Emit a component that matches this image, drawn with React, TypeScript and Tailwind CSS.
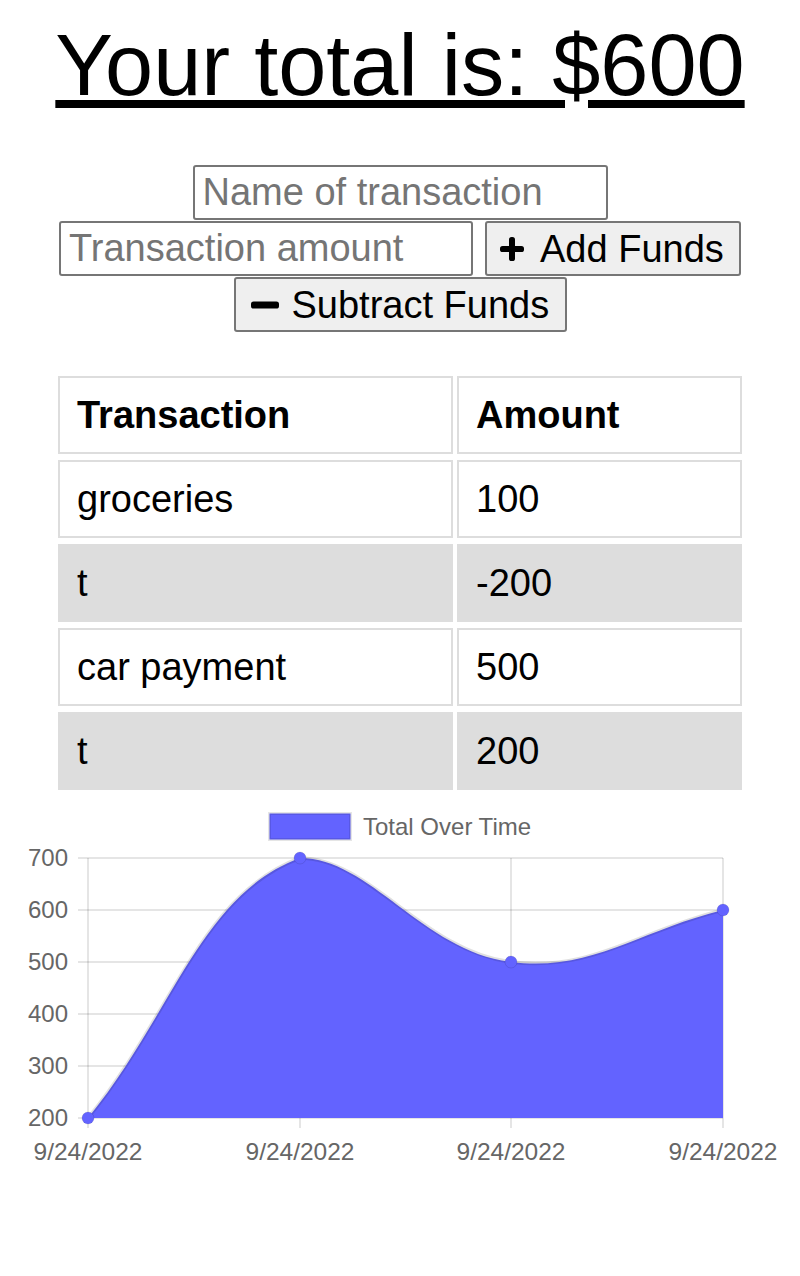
import React from 'react';

// 取引データ
const transactions = [
  { name: 'groceries', amount: 100 },
  { name: 't', amount: -200 },
  { name: 'car payment', amount: 500 },
  { name: 't', amount: 200 },
];

const BLUE = '#6363ff';
const GRID = 'rgba(0,0,0,0.1)';
const FONT = "'Liberation Sans', Arial, sans-serif";

const PlusIcon = () => (
  <svg width="24" height="24" viewBox="0 0 24 24" className="shrink-0">
    <rect x="9" y="0" width="6" height="24" rx="2.6" fill="black" />
    <rect x="0" y="9" width="24" height="6" rx="2.6" fill="black" />
  </svg>
);

const MinusIcon = () => (
  <svg width="28" height="8" viewBox="0 0 28 8" className="shrink-0">
    <rect x="0" y="0.5" width="28" height="7" rx="2.6" fill="black" />
  </svg>
);

// グラフ（Chart.js風のラインチャート）
const TotalChart = () => {
  const yTicks = [700, 600, 500, 400, 300, 200];
  const xs = [88, 300, 511, 723];
  const yOf = (v: number) => 1118 - ((v - 200) / 100) * 52;
  const points = [200, 700, 500, 600].map((v, i) => ({ x: xs[i], y: yOf(v) }));
  const curve =
    'M88,1118 C172.8,1014 200.6,894.7 300,858 C369.8,858 423.2,951.2 511,962 C592.4,972 638.2,930.8 723,910';

  return (
    <svg width="800" height="380" viewBox="0 800 800 380" className="block">
      {/* 凡例 */}
      <rect x="269.5" y="813.5" width="81" height="26" fill={BLUE} stroke={GRID} strokeWidth="3" />
      <text x="363" y="835" fontSize="24" fill="#666" fontFamily={FONT}>
        Total Over Time
      </text>

      {/* グリッド */}
      {yTicks.map((t) => (
        <line key={t} x1="78" x2="723" y1={yOf(t)} y2={yOf(t)} stroke={GRID} strokeWidth="2" />
      ))}
      {xs.map((x) => (
        <line key={x} x1={x} x2={x} y1="858" y2="1128" stroke={GRID} strokeWidth="2" />
      ))}

      {/* 目盛りラベル */}
      {yTicks.map((t) => (
        <text key={t} x="68" y={yOf(t) + 8} textAnchor="end" fontSize="24" fill="#666" fontFamily={FONT}>
          {t}
        </text>
      ))}
      {xs.map((x) => (
        <text key={x} x={x} y="1160" textAnchor="middle" fontSize="24.5" fill="#666" fontFamily={FONT}>
          9/24/2022
        </text>
      ))}

      {/* 面と線 */}
      <path d={`${curve} L723,1118 L88,1118 Z`} fill={BLUE} />
      <path d={curve} fill="none" stroke="rgba(0,0,0,0.12)" strokeWidth="3.5" />

      {points.map((p, i) => (
        <circle key={i} cx={p.x} cy={p.y} r="6" fill={BLUE} stroke={GRID} strokeWidth="1" />
      ))}
    </svg>
  );
};

export default function App() {
  return (
    <div className="w-[800px] min-h-[1276px] bg-white text-black font-['Liberation_Sans',Arial,sans-serif]">
      <h1 className="pt-[16px] text-center text-[86.5px] leading-[98px] font-normal underline">
        Your total is: $600
      </h1>

      {/* 入力フォーム */}
      <div className="mt-[51px] flex flex-col items-center gap-[1px]">
        <input
          type="text"
          placeholder="Name of transaction"
          className="h-[55px] w-[415px] rounded-[3px] border-2 border-[#767676] bg-white px-[8px] text-[38px] placeholder:text-[#757575] outline-none"
        />
        <div className="flex items-center gap-[12px]">
          <input
            type="text"
            placeholder="Transaction amount"
            className="h-[55px] w-[414px] rounded-[3px] border-2 border-[#767676] bg-white px-[8px] text-[38px] placeholder:text-[#757575] outline-none"
          />
          <button className="flex h-[55px] w-[256px] items-center gap-[16px] rounded-[3px] border-2 border-[#767676] bg-[#efefef] pl-[13px] text-[38px] leading-none">
            <PlusIcon />
            Add Funds
          </button>
        </div>
        <button className="flex h-[55px] w-[333px] items-center gap-[13px] rounded-[3px] border-2 border-[#767676] bg-[#efefef] pl-[15px] text-[38px] leading-none">
          <MinusIcon />
          Subtract Funds
        </button>
      </div>

      {/* 取引テーブル */}
      <div className="mx-auto mt-[44px] grid w-[684px] grid-cols-[395px_285px] gap-x-[4px] gap-y-[6px] text-[38px]">
        <div className="flex h-[78px] items-center border-2 border-[#dddddd] pl-[17px] font-bold">Transaction</div>
        <div className="flex h-[78px] items-center border-2 border-[#dddddd] pl-[17px] font-bold">Amount</div>
        {transactions.map((t, i) => {
          const shaded = i % 2 === 1;
          const cell = shaded
            ? 'flex h-[78px] items-center border-2 border-[#dddddd] bg-[#dddddd] pl-[17px]'
            : 'flex h-[78px] items-center border-2 border-[#dddddd] bg-white pl-[17px]';
          return (
            <React.Fragment key={i}>
              <div className={cell}>{t.name}</div>
              <div className={cell}>{t.amount}</div>
            </React.Fragment>
          );
        })}
      </div>

      <div className="mt-[10px]">
        <TotalChart />
      </div>
    </div>
  );
}
